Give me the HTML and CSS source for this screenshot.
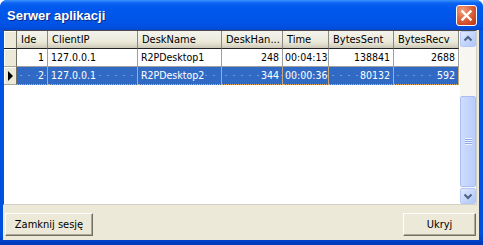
FILE: index.html
```html
<!DOCTYPE html>
<html>
<head>
    <title>Serwer aplikacji</title>
    <link rel="stylesheet" href="styles.css">
</head>
<body>
    <div class="window">
        <div class="titlebar">
            <span class="title">Serwer aplikacji</span>
            <div class="close-btn">
                <svg width="21" height="21" viewBox="0 0 21 21">
                    <path d="M6.5 6.5 L14.5 14.5 M14.5 6.5 L6.5 14.5" stroke="#fff" stroke-width="2.4" stroke-linecap="square"/>
                </svg>
            </div>
        </div>
        <div class="frame">
            <div class="client">
                <div class="grid">
                    <div class="grid-rows">
                        <div class="row head">
                            <div class="cell ind"></div>
                            <div class="cell">Ide</div>
                            <div class="cell">ClientIP</div>
                            <div class="cell">DeskName</div>
                            <div class="cell">DeskHan...</div>
                            <div class="cell">Time</div>
                            <div class="cell">BytesSent</div>
                            <div class="cell">BytesRecv</div>
                        </div>
                        <div class="row">
                            <div class="cell ind"></div>
                            <div class="cell num">1</div>
                            <div class="cell">127.0.0.1</div>
                            <div class="cell">R2PDesktop1</div>
                            <div class="cell num">248</div>
                            <div class="cell time">00:04:13</div>
                            <div class="cell num">138841</div>
                            <div class="cell num">2688</div>
                        </div>
                        <div class="row selected">
                            <div class="cell ind"><span class="arrow"></span></div>
                            <div class="cell num">2</div>
                            <div class="cell">127.0.0.1</div>
                            <div class="cell">R2PDesktop2</div>
                            <div class="cell num">344</div>
                            <div class="cell time">00:00:36</div>
                            <div class="cell num">80132</div>
                            <div class="cell num">592</div>
                        </div>
                    </div>
                    <div class="vscroll">
                        <div class="sb-btn">
                            <svg width="14" height="14" viewBox="0 0 14 14"><path d="M3.5 8.5 L7 5 L10.5 8.5" fill="none" stroke="#4d6185" stroke-width="2"/></svg>
                        </div>
                        <div class="sb-track"></div>
                        <div class="sb-thumb">
                            <span class="grip"></span>
                        </div>
                        <div class="sb-btn">
                            <svg width="14" height="14" viewBox="0 0 14 14"><path d="M3.5 5.5 L7 9 L10.5 5.5" fill="none" stroke="#4d6185" stroke-width="2"/></svg>
                        </div>
                    </div>
                </div>
                <div class="actions">
                    <button class="btn btn-close">Zamknij sesję</button>
                    <button class="btn btn-hide">Ukryj</button>
                </div>
            </div>
        </div>
    </div>
</body>
</html>
```

FILE: styles.css
```css
body {
    margin: 0;
    background: #fff;
    font-family: "DejaVu Sans Condensed", "DejaVu Sans", sans-serif;
    font-stretch: condensed;
    font-size: 10.5px;
}

.window {
    width: 483px;
    height: 245px;
    display: flex;
    flex-direction: column;
    background: #0053e1;
    border-radius: 7px 7px 0 0;
    overflow: hidden;
}

.titlebar {
    height: 30px;
    flex: none;
    display: flex;
    align-items: center;
    justify-content: space-between;
    padding: 0 6px 0 7px;
    background: linear-gradient(to bottom, #3d95ff 0, #0a63f0 3px, #0058ee 8px, #0055e8 20px, #0050e0 27px, #0046d0 30px);
}

.title {
    font-family: "Liberation Sans", Arial, sans-serif;
    font-stretch: normal;
    font-weight: bold;
    font-size: 13px;
    color: #fff;
    text-shadow: 1px 1px #0c2a8a;
    margin-top: 1px;
}

.close-btn {
    width: 21px;
    height: 21px;
    box-sizing: border-box;
    border: 1px solid #fff;
    border-radius: 3px;
    background: radial-gradient(circle at 30% 25%, #f0a080 0, #e06a45 40%, #c9431f 80%, #b83a18 100%);
    margin-top: 1px;
    position: relative;
}

.close-btn svg {
    position: absolute;
    left: -1px;
    top: -1px;
}

.frame {
    flex: 1;
    display: flex;
    padding: 0 4px 5px 3px;
    background: linear-gradient(to bottom, #0055e5 0, #0050dd 95%, #0038b8 100%);
}

.client {
    flex: 1;
    display: flex;
    flex-direction: column;
    background: #ece9d8;
    padding-right: 2px;
}

.grid {
    height: 175px;
    box-sizing: border-box;
    border: 1px solid #4a4a4a;
    border-right-color: #d4d0c8;
    border-bottom-color: #d4d0c8;
    background: #fff;
    display: flex;
    justify-content: space-between;
}

.row {
    display: grid;
    grid-template-columns: 13px 31px 90px 84px 61px 46px 65px 65px;
    height: 18px;
}

.cell {
    box-sizing: border-box;
    border-right: 1px solid #a0a0a0;
    border-bottom: 1px solid #a0a0a0;
    padding: 0 2px 0 3px;
    line-height: 17px;
    white-space: nowrap;
    overflow: hidden;
}

.num {
    text-align: right;
    padding: 0 3px 0 2px;
}

.time {
    padding: 0 1px 0 2px;
}

.head .cell {
    background: linear-gradient(to bottom, #f4f3ee 0, #ebeadb 60%, #e2decd 78%, #d6d2c2 90%, #cbc7b8 100%);
    border-right: 1px solid #8c8a80;
    border-bottom: 1px solid #222;
    padding: 0 2px 0 4px;
    font-size: 11px;
}

.cell.ind {
    background: #ece9d8;
    border-right: 1px solid #716f64;
    border-bottom: 1px solid #aca899;
    box-shadow: inset 1px 1px #fff;
    padding: 0;
    position: relative;
}

.head .cell.ind {
    background: #ece9d8;
    border-right: 1px solid #716f64;
    border-bottom: 1px solid #222;
    padding: 0;
}

.arrow {
    position: absolute;
    left: 4px;
    top: 4px;
    width: 0;
    height: 0;
    border-top: 5px solid transparent;
    border-bottom: 5px solid transparent;
    border-left: 5px solid #000;
}

.selected .cell {
    background-color: #316ac5;
    background-image: radial-gradient(circle, rgba(255, 255, 255, 0.3) 0.6px, transparent 0.9px);
    background-size: 8px 17px;
    color: #fff;
    border-right-color: #c8a878;
    border-bottom: 1px dotted #e8b060;
}

.selected .cell.ind {
    background: #ece9d8;
    color: #000;
    border-right: 1px solid #716f64;
    border-bottom: 1px solid #aca899;
}

.selected {
    box-shadow: inset 0 1px #e8b060;
}

.vscroll {
    width: 16px;
    display: flex;
    flex-direction: column;
    background: #f7f6f1;
}

.sb-btn {
    height: 16px;
    box-sizing: border-box;
    border: 1px solid #b4c8f6;
    border-radius: 2px;
    background: linear-gradient(to bottom right, #e0e9fe, #c1d3fb 60%, #b0c6f8);
    display: flex;
    align-items: center;
    justify-content: center;
    flex: none;
}

.sb-track {
    height: 49px;
    flex: none;
}

.sb-thumb {
    height: 91px;
    box-sizing: border-box;
    border: 1px solid #a9bff4;
    border-radius: 2px;
    background: linear-gradient(to right, #cfdcfd, #c3d4fc 50%, #b9cdfa);
    display: flex;
    align-items: center;
    justify-content: center;
    margin-bottom: 1px;
    flex: none;
}

.grip {
    width: 7px;
    height: 7px;
    background: repeating-linear-gradient(to bottom, #eef3fe 0, #eef3fe 1px, #8ca6e6 1px, #8ca6e6 2px);
}

.actions {
    flex: 1;
    display: flex;
    justify-content: space-between;
    align-items: flex-start;
    padding: 8px 1px 0 2px;
}

.btn {
    height: 23px;
    box-sizing: border-box;
    font-family: inherit;
    font-size: 11px;
    color: #000;
    background: #ece9d8;
    border: 1px solid;
    border-color: #fff #716f64 #716f64 #fff;
    box-shadow: inset -1px -1px #aca899;
    padding: 0;
    margin: 0;
}

.btn-close {
    width: 88px;
}

.btn-hide {
    width: 73px;
}
```
